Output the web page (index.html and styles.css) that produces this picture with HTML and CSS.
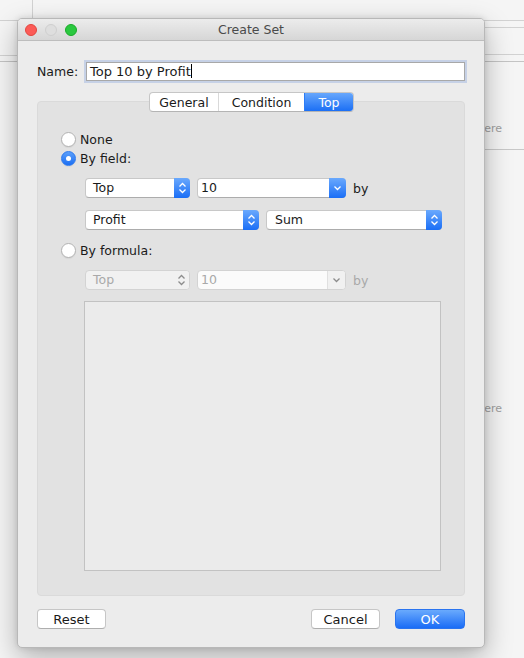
FILE: index.html
```html
<!DOCTYPE html>
<html>
<head>
    <title>Create Set</title>
    <meta name="viewport" content="width=device-width, initial-scale=1.0">
    <link rel="stylesheet" href="styles.css">
</head>
<body>
    <!-- workspace behind the dialog -->
    <div class="desk">
        <div class="rule col-rule"></div>
        <div class="rule row-rule left r20"></div>
        <div class="rule row-rule left r55"></div>
        <div class="rule row-rule left r61"></div>
        <div class="rule row-rule right r20"></div>
        <div class="rule row-rule right r27"></div>
        <div class="rule row-rule right r54"></div>
        <div class="rule row-rule right r61"></div>
        <div class="rule row-rule right r149"></div>
        <span class="drop-hint hint-top">Drop field here</span>
        <span class="drop-hint hint-bottom">Drop field here</span>
    </div>

    <div id="dialog">
        <div class="titlebar">
            <div class="lights">
                <span class="light close"></span>
                <span class="light mini"></span>
                <span class="light zoom"></span>
            </div>
            <div class="title">Create Set</div>
        </div>

        <div class="content">
            <div class="name-row">
                <span class="label">Name:</span>
                <div class="name-field">Top 10 by Profit<span class="caret"></span></div>
            </div>

            <div class="panel">
                <div class="tabs">
                    <span class="tab tab-general">General</span>
                    <span class="tab tab-condition">Condition</span>
                    <span class="tab tab-top selected">Top</span>
                </div>

                <div class="radio-row first">
                    <span class="radio"></span>None
                </div>
                <div class="radio-row">
                    <span class="radio checked"></span>By field:
                </div>

                <div class="field-row row-count">
                    <div class="popup w-order">
                        <span class="value">Top</span>
                        <span class="cap">
                            <svg width="9" height="14" viewBox="0 0 9 14"><path d="M1.5 5.5 L4.5 2.5 L7.5 5.5 M1.5 8.5 L4.5 11.5 L7.5 8.5" /></svg>
                        </span>
                    </div>
                    <div class="combo w-count">
                        <span class="value">10</span>
                        <span class="cap">
                            <svg width="9" height="14" viewBox="0 0 9 14"><path d="M1.5 5.5 L4.5 8.5 L7.5 5.5" /></svg>
                        </span>
                    </div>
                    <span class="by">by</span>
                </div>
                <div class="field-row row-measure">
                    <div class="popup w-field">
                        <span class="value">Profit</span>
                        <span class="cap">
                            <svg width="9" height="14" viewBox="0 0 9 14"><path d="M1.5 5.5 L4.5 2.5 L7.5 5.5 M1.5 8.5 L4.5 11.5 L7.5 8.5" /></svg>
                        </span>
                    </div>
                    <div class="popup w-agg">
                        <span class="value">Sum</span>
                        <span class="cap">
                            <svg width="9" height="14" viewBox="0 0 9 14"><path d="M1.5 5.5 L4.5 2.5 L7.5 5.5 M1.5 8.5 L4.5 11.5 L7.5 8.5" /></svg>
                        </span>
                    </div>
                </div>

                <div class="radio-row formula">
                    <span class="radio"></span>By formula:
                </div>
                <div class="field-row row-formula disabled">
                    <div class="popup w-order">
                        <span class="value">Top</span>
                        <span class="cap">
                            <svg width="9" height="14" viewBox="0 0 9 14"><path d="M1.5 5.5 L4.5 2.5 L7.5 5.5 M1.5 8.5 L4.5 11.5 L7.5 8.5" /></svg>
                        </span>
                    </div>
                    <div class="combo w-count">
                        <span class="value">10</span>
                        <span class="cap">
                            <svg width="9" height="14" viewBox="0 0 9 14"><path d="M1.5 5.5 L4.5 8.5 L7.5 5.5" /></svg>
                        </span>
                    </div>
                    <span class="by">by</span>
                </div>
                <div class="formula-box"></div>
            </div>

            <div class="footer">
                <button class="btn">Reset</button>
                <span class="spacer"></span>
                <button class="btn">Cancel</button>
                <button class="btn primary">OK</button>
            </div>
        </div>
    </div>
</body>
</html>
```

FILE: styles.css
```css
/* General styling */
html, body {
    margin: 0;
    width: 524px;
    height: 658px;
    overflow: hidden;
}
body {
    position: relative;
    background: #f5f5f5;
    font-family: "DejaVu Sans", "Liberation Sans", sans-serif;
    font-size: 12.5px;
    color: #1a1a1a;
}

/* Workspace behind the dialog */
.desk {
    position: absolute;
    inset: 0;
}
.rule {
    position: absolute;
    background: #d2d2d2;
}
.col-rule {
    left: 32px;
    top: 0;
    width: 1px;
    height: 20px;
}
.row-rule {
    height: 1px;
}
.row-rule.left { left: 0; width: 20px; }
.row-rule.right { left: 480px; width: 44px; }
.r20 { top: 20px; }
.r27 { top: 27px; }
.r54 { top: 54px; }
.r55 { top: 55px; }
.r61 { top: 61px; background: #c4c4c4; }
.r149 { top: 149px; background: #c8c8c8; }
.drop-hint {
    position: absolute;
    right: 22px;
    font-size: 11px;
    color: #a0a0a0;
}
.hint-top { top: 122px; }
.hint-bottom { top: 402px; }

/* Dialog window */
#dialog {
    position: relative;
    z-index: 1;
    margin: 18px 0 0 17px;
    width: 468px;
    height: 630px;
    box-sizing: border-box;
    background: #ececec;
    border: 1px solid #b8b8b8;
    border-radius: 5px;
    box-shadow: 0 10px 28px rgba(0, 0, 0, 0.28), 0 0 6px rgba(0, 0, 0, 0.12);
    display: flex;
    flex-direction: column;
    overflow: hidden;
}
.titlebar {
    height: 22px;
    box-sizing: border-box;
    display: flex;
    align-items: center;
    background: linear-gradient(to bottom, #ececec, #d6d6d6);
    border-bottom: 1px solid #bdbdbd;
    position: relative;
}
.lights {
    display: flex;
    gap: 8px;
    padding-left: 7px;
}
.light {
    width: 12px;
    height: 12px;
    box-sizing: border-box;
    border-radius: 50%;
}
.light.close { background: #fc5b57; border: 1px solid #e2463f; }
.light.mini { background: #dedede; border: 1px solid #cfcfcf; }
.light.zoom { background: #2ac83f; border: 1px solid #1aab29; }
.title {
    position: absolute;
    left: 0;
    right: 0;
    text-align: center;
    font-size: 12.5px;
    color: #4a4a4a;
}

/* Body of the dialog */
.content {
    flex: 1;
    display: flex;
    flex-direction: column;
    padding: 20px 19px 0 19px;
}
.name-row {
    display: flex;
    align-items: center;
    height: 20px;
}
.label {
    width: 49px;
}
.name-field {
    flex: 1;
    height: 19px;
    box-sizing: border-box;
    background: #fff;
    border: 1px solid #a8a8a8;
    box-shadow: 0 0 0 2px #c6d1e6;
    padding-left: 3px;
    line-height: 17px;
    font-size: 13px;
}
.caret {
    display: inline-block;
    width: 1px;
    height: 14px;
    background: #000;
    vertical-align: -2px;
}

/* Tab panel */
.panel {
    margin-top: 20px;
    height: 495px;
    box-sizing: border-box;
    background: #e2e2e2;
    border: 1px solid #dadada;
    border-radius: 4px;
    display: flex;
    flex-direction: column;
    padding: 0 0 0 23px;
}
.tabs {
    align-self: center;
    margin: -10px 0 0 -22px;
    display: flex;
    height: 20px;
    box-sizing: border-box;
    background: #fff;
    border: 1px solid #c6c6c6;
    border-bottom-color: #b4b4b4;
    border-radius: 4px;
    overflow: hidden;
}
.tab {
    display: flex;
    align-items: center;
    justify-content: center;
    border-left: 1px solid #d9d9d9;
}
.tab-general { width: 68px; border-left: none; }
.tab-condition { width: 85px; }
.tab-top { width: 48px; }
.tab.selected {
    color: #fff;
    border-left-color: #2c7cf6;
    background: linear-gradient(to bottom, #67a7fc, #1b6ff5);
}

/* Radio buttons */
.radio-row {
    display: flex;
    align-items: center;
    height: 15px;
    margin-top: 4px;
}
.radio-row.first { margin-top: 20px; }
.radio-row.formula { margin-top: 13px; }
.radio {
    width: 15px;
    height: 15px;
    box-sizing: border-box;
    border-radius: 50%;
    background: #fff;
    border: 1px solid #b2b2b2;
    box-shadow: 0 1px 1px rgba(0, 0, 0, 0.06);
    margin-right: 4px;
    position: relative;
}
.radio.checked {
    border-color: #2a78f0;
    background: linear-gradient(to bottom, #5b9ffa, #1c6ff3);
}
.radio.checked::after {
    content: "";
    position: absolute;
    left: 4px;
    top: 4px;
    width: 5px;
    height: 5px;
    border-radius: 50%;
    background: #fff;
}

/* Popups and combo boxes */
.field-row {
    display: flex;
    align-items: center;
    gap: 7px;
    margin-left: 24px;
    height: 20px;
}
.row-count { margin-top: 12px; }
.row-measure { margin-top: 12px; }
.row-formula { margin-top: 12px; }
.popup, .combo {
    display: flex;
    height: 20px;
    box-sizing: border-box;
    background: #fff;
    border: 1px solid #c8c8c8;
    border-bottom-color: #acacac;
    border-radius: 4px;
}
.value {
    flex: 1;
    line-height: 18px;
    padding-left: 7px;
}
.combo .value { padding-left: 3px; }
.cap {
    width: 16px;
    margin: -1px -1px -1px 0;
    border-radius: 0 4px 4px 0;
    background: linear-gradient(to bottom, #6aa9fd, #1a6ef6);
    display: flex;
    align-items: center;
    justify-content: center;
}
.combo .cap { width: 17px; }
.cap svg path {
    fill: none;
    stroke: #fff;
    stroke-width: 1.3;
}
.w-order { width: 105px; }
.w-count { width: 149px; }
.w-field { width: 174px; }
.w-agg { width: 176px; }
.w-agg .value { padding-left: 8px; }

/* Disabled row under "By formula" */
.disabled { color: #a9a9a9; }
.disabled .popup {
    background: #f1f1f1;
    border-color: #d3d3d3;
}
.disabled .combo {
    background: #fbfbfb;
    border-color: #d3d3d3;
}
.disabled .cap {
    margin: 0;
    background: #f1f1f1;
    border-left: 1px solid #e0e0e0;
    border-radius: 0 3px 3px 0;
}
.disabled .popup .cap { border-left: none; }
.disabled .cap svg path { stroke: #8c8c8c; }

.formula-box {
    margin: 11px 0 0 23px;
    width: 357px;
    height: 270px;
    box-sizing: border-box;
    background: #ebebeb;
    border: 1px solid #c2c2c2;
}

/* Buttons */
.footer {
    display: flex;
    align-items: center;
    margin-top: 13px;
    gap: 15px;
}
.spacer { flex: 1; }
.btn {
    width: 69px;
    height: 20px;
    box-sizing: border-box;
    padding: 0;
    font-family: inherit;
    font-size: 13px;
    color: #1a1a1a;
    background: #fff;
    border: 1px solid #c6c6c6;
    border-bottom-color: #aeaeae;
    border-radius: 4px;
}
.btn.primary {
    width: 70px;
    color: #fff;
    border-color: #2a74ef;
    background: linear-gradient(to bottom, #6aaafd, #1a6cf6);
}
```
